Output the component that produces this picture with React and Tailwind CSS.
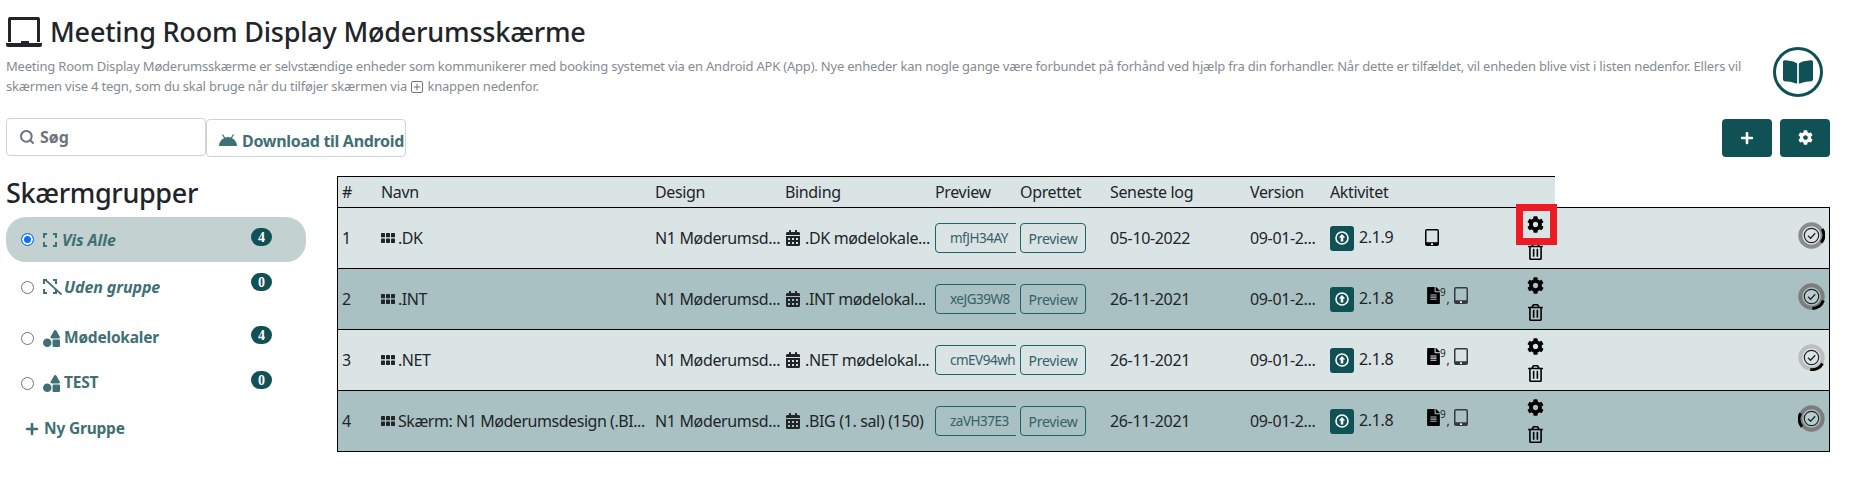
import { Plus, Search } from "lucide-react";
import { FaBookOpen, FaCalendarAlt, FaCog, FaFileAlt, FaPlus, FaRegTrashAlt, FaShapes } from "react-icons/fa";

const GROUPS = [
    { label: "Vis Alle", count: 4, icon: "all", active: true, italic: true, rowClass: "h-[45px] mb-px", badgeClass: "mt-[11px]" },
    { label: "Uden gruppe", count: 0, icon: "none", italic: true, rowClass: "h-[48px]", badgeClass: "mt-[10px]" },
    { label: "Mødelokaler", count: 4, icon: "shapes", rowClass: "h-[54px]", badgeClass: "mt-[15px]" },
    { label: "TEST", count: 0, icon: "shapes", rowClass: "h-[36px]", badgeClass: "mt-[6px]" },
];

const ROWS = [
    { id: 1, name: ".DK", binding: ".DK mødelokale...", code: "mfJH34AY", created: "05-10-2022", version: "2.1.9", file: false, ring: "#8b8b8b", rotate: 0, marked: true },
    { id: 2, name: ".INT", binding: ".INT mødelokal...", code: "xeJG39W8", created: "26-11-2021", version: "2.1.8", file: true, ring: "#7d7d7d", rotate: 50 },
    { id: 3, name: ".NET", binding: ".NET mødelokal...", code: "cmEV94wh", created: "26-11-2021", version: "2.1.8", file: true, ring: "#bdbdbd", rotate: 60 },
    { id: 4, name: "Skærm: N1 Møderumsdesign (.BI...", binding: ".BIG (1. sal) (150)", code: "zaVH37E3", created: "26-11-2021", version: "2.1.8", file: true, ring: "#7d7d7d", rotate: 170 },
];

const HEADERS = ["#", "Navn", "Design", "Binding", "Preview", "Oprettet", "Seneste log", "Version", "Aktivitet", ""];

function LaptopIcon() {
    return (
        <svg width="36" height="30" viewBox="0 0 36 30" fill="#212529">
            <path d="M4 0h28a2 2 0 0 1 2 2v23h-3V3H5v22H2V2a2 2 0 0 1 2-2z" />
            <path d="M0 26h15v-2h8v2h13v2a2 2 0 0 1-2 2H2a2 2 0 0 1-2-2z" />
        </svg>
    );
}

function AndroidIcon() {
    return (
        <svg width="18" height="12" viewBox="0 0 18 12" fill="#3f7073" className="mt-[4px] shrink-0">
            <path d="M0 12a9 9 0 0 1 18 0z" />
            <path d="M3.5 0.5l2.5 4M14.5 0.5l-2.5 4" stroke="#3f7073" strokeWidth="1.2" />
        </svg>
    );
}

function CornersIcon() {
    return (
        <svg width="14" height="14" viewBox="0 0 14 14" fill="none" stroke="#3f7073" strokeWidth="2" className="mr-[5px] shrink-0">
            <path d="M1 5V1h3M10 1h3v4M13 9v4h-3M4 13H1V9" />
        </svg>
    );
}

function SlashedCornersIcon() {
    return (
        <svg width="20" height="16" viewBox="0 0 20 16" fill="none" stroke="#3f7073" strokeWidth="2" className="mr-px shrink-0">
            <path d="M1 5V1h3M10 1h3v4M13 10v4h-3M4 14H1v-4" />
            <path d="M1.5 0l17 15.5" strokeWidth="1.7" />
        </svg>
    );
}

function GroupIcon({ kind }) {
    if (kind === "shapes") return <FaShapes size={17} className="text-[#3f7073] mr-[4px] shrink-0" />;
    if (kind === "none") return <SlashedCornersIcon />;
    return <CornersIcon />;
}

function DotsIcon() {
    return (
        <svg width="14" height="10" viewBox="0 0 14 10" fill="#212529" className="shrink-0">
            <rect x="0" y="0" width="4" height="4.3" rx="0.6" />
            <rect x="5" y="0" width="4" height="4.3" rx="0.6" />
            <rect x="10" y="0" width="4" height="4.3" rx="0.6" />
            <rect x="0" y="5.6" width="4" height="4.3" rx="0.6" />
            <rect x="5" y="5.6" width="4" height="4.3" rx="0.6" />
            <rect x="10" y="5.6" width="4" height="4.3" rx="0.6" />
        </svg>
    );
}

function TabletIcon({ dim }) {
    const color = dim ? "#33393c" : "#000000";
    return (
        <svg width="14" height="17" viewBox="0 0 14 17" fill={color} className="shrink-0">
            <path d="M2 0h10a2 2 0 0 1 2 2v13a2 2 0 0 1-2 2H2a2 2 0 0 1-2-2V2a2 2 0 0 1 2-2zm0 1.5a.5.5 0 0 0-.5.5v11.2h11V2a.5.5 0 0 0-.5-.5z" />
            <rect x="6" y="14.4" width="2" height="1.6" fill="#ffffff" />
        </svg>
    );
}

function UpCircleIcon() {
    return (
        <svg width="14" height="14" viewBox="0 0 14 14">
            <circle cx="7" cy="7" r="6" fill="none" stroke="#ffffff" strokeWidth="1.6" />
            <path d="M7 3l3.2 3.6H8.3V10.6H5.7V6.6H3.8z" fill="#ffffff" />
        </svg>
    );
}

function StatusRing({ color, rotate }) {
    return (
        <svg width="27" height="27" viewBox="0 0 27 27" fill="none">
            <circle cx="13.5" cy="13.5" r="11.2" stroke={color} strokeWidth="4" />
            <path d="M24.2 7a11.5 11.5 0 0 1-1 13.5" stroke="#000000" strokeWidth="3" transform={`rotate(${rotate} 13.5 13.5)`} />
            <circle cx="13.5" cy="13.5" r="7.2" stroke="#212529" strokeWidth="1.2" fill="#dae4e5" fillOpacity="0.35" />
            <path d="M10 13.8l2.6 2.5 4.6-5" stroke="#212529" strokeWidth="1.3" />
        </svg>
    );
}

function SearchBox() {
    return (
        <div className="w-[200px] h-[38px] flex items-center gap-[5px] pl-3 border border-[#ced4da] rounded text-[16px] font-bold text-[#6c757d]">
            <Search size={16} strokeWidth={3} />
            <span>Søg</span>
        </div>
    );
}

function Sidebar() {
    return (
        <aside className="w-[331px] shrink-0">
            <h2 className="text-[27px] leading-[32px] font-medium text-[#212529] mt-px mb-[8px] tracking-[-0.35px]">Skærmgrupper</h2>
            {GROUPS.map((g) => (
                <div key={g.label} className={`w-[300px] flex items-start pl-[15px] ${g.rowClass} ${g.active ? "bg-[#c3d1d1] rounded-[20px]" : ""}`}>
                    <div className="w-[230px] h-full flex items-center">
                        <span className={`w-[13px] h-[13px] mr-[9px] rounded-full shrink-0 ${g.active ? "border border-[#0d6efd] bg-[#0d6efd] shadow-[inset_0_0_0_2px_#ffffff]" : "border border-[#6f7478] bg-white"}`} />
                        <GroupIcon kind={g.icon} />
                        <span className={`font-bold text-[#3f7073] ${g.italic ? "text-[16px] tracking-[-0.1px] italic" : "text-[15.5px] tracking-[-0.2px]"}`}>{g.label}</span>
                    </div>
                    <span className={`w-[21px] h-[18px] rounded-full bg-[#0f5155] text-white text-[14px] font-bold flex items-center justify-center font-['Liberation_Serif',serif] ${g.badgeClass}`}>
                        {g.count}
                    </span>
                </div>
            ))}
            <div className="flex items-center gap-[5px] pl-[19px] mt-[16px] text-[15.5px] font-bold text-[#3f7073] tracking-[-0.2px]">
                <FaPlus size={14} />
                <span>Ny Gruppe</span>
            </div>
        </aside>
    );
}

function DeviceTable() {
    return (
        <table className="w-[1493px] table-fixed border-separate border-spacing-0 text-[16px] text-[#212529] tracking-[-0.35px]">
            <colgroup>
                <col className="w-[40px]" />
                <col className="w-[274px]" />
                <col className="w-[130px]" />
                <col className="w-[150px]" />
                <col className="w-[85px]" />
                <col className="w-[90px]" />
                <col className="w-[140px]" />
                <col className="w-[80px]" />
                <col className="w-[95px]" />
                <col className="w-[95px]" />
                <col className="w-[39px]" />
                <col />
            </colgroup>
            <thead>
                <tr className="h-[32px] bg-[#dae4e5]">
                    {HEADERS.map((h, i) => (
                        <th key={i} className={`font-normal text-left pl-1 border-t border-b border-black ${i === 0 ? "border-l" : ""}`}>
                            {h}
                        </th>
                    ))}
                    <th className="border-t border-b border-black" />
                    <th className="bg-white border-b border-black" />
                </tr>
            </thead>
            <tbody>
                {ROWS.map((r) => (
                    <tr key={r.id} className={`h-[61px] ${r.id % 2 ? "bg-[#dae4e5]" : "bg-[#a9c1c2]"}`}>
                        <td className="pl-1 border-l border-b border-black">{r.id}</td>
                        <td className="pl-1 border-b border-black">
                            <div className="flex items-center gap-[3px] whitespace-nowrap tracking-[-0.45px]">
                                <DotsIcon />
                                <span>{r.name}</span>
                            </div>
                        </td>
                        <td className="pl-1 border-b border-black whitespace-nowrap">N1 Møderumsd...</td>
                        <td className="pl-1 border-b border-black">
                            <div className="flex items-center gap-[4px] whitespace-nowrap">
                                <FaCalendarAlt size={16} className="shrink-0" />
                                <span>{r.binding}</span>
                            </div>
                        </td>
                        <td className="pl-1 border-b border-black overflow-hidden">
                            <div className="w-[95px] h-[30px] pl-[14px] flex items-center border border-[#1c6468] rounded text-[13.5px] text-[#36606a] whitespace-nowrap tracking-[-0.5px]">{r.code}</div>
                        </td>
                        <td className="pl-1 border-b border-black">
                            <div className="w-[66px] h-[30px] flex items-center justify-center border border-[#1c6468] rounded text-[14px] text-[#36606a] tracking-[-0.3px]">Preview</div>
                        </td>
                        <td className="pl-1 border-b border-black">{r.created}</td>
                        <td className="pl-1 border-b border-black whitespace-nowrap">09-01-2...</td>
                        <td className="pl-1 border-b border-black">
                            <div className="flex items-center gap-[5px]">
                                <div className="w-[24px] h-[25px] rounded-[3px] bg-[#0f5155] flex items-center justify-center">
                                    <UpCircleIcon />
                                </div>
                                <span className="-mt-[2px]">{r.version}</span>
                            </div>
                        </td>
                        <td className="pl-1 border-b border-black">
                            <div className="flex items-start gap-[1px] -mt-[1px]">
                                {r.file && (
                                    <>
                                        <FaFileAlt size={17} className="text-black" />
                                        <span className="text-[10px] leading-[10px] -ml-[3px]">9</span>
                                        <span className="text-[12px] leading-[24px] mr-[4px]">,</span>
                                    </>
                                )}
                                <TabletIcon dim={r.file} />
                            </div>
                        </td>
                        <td className="border-b border-black">
                            <div className="relative flex flex-col items-center gap-[10px] text-black">
                                <FaCog size={17} />
                                <FaRegTrashAlt size={17} />
                                {r.marked && <span className="absolute -top-[12px] left-0 w-[41px] h-[41px] border-[7px] border-[#ed1c24]" />}
                            </div>
                        </td>
                        <td className="border-b border-r border-black pr-[4px]">
                            <div className="flex justify-end -mt-[5px]">
                                <StatusRing color={r.ring} rotate={r.rotate} />
                            </div>
                        </td>
                    </tr>
                ))}
            </tbody>
        </table>
    );
}

export default function App() {
    return (
        <div className="min-h-[493px] bg-white px-[6px] font-['Noto_Sans',sans-serif]">
            <div className="flex items-start pt-[16px]">
                <div className="flex-1 min-w-0">
                    <h1 className="flex items-center gap-[8px] text-[27px] leading-[32px] font-medium text-[#212529] tracking-[-0.2px]">
                        <LaptopIcon />
                        <span>Meeting Room Display Møderumsskærme</span>
                    </h1>
                    <p className="w-[1750px] mt-[8px] text-[13px] leading-[20px] text-[#858b90] tracking-[-0.2px]">
                        Meeting Room Display Møderumsskærme er selvstændige enheder som kommunikerer med booking systemet via en Android APK (App). Nye enheder kan nogle gange være forbundet på forhånd ved hjælp fra din forhandler. Når dette er tilfældet, vil enheden blive vist i listen nedenfor. Ellers vil skærmen vise 4 tegn, som du skal bruge når du tilføjer skærmen via{" "}
                        <Plus size={12} strokeWidth={2.5} className="inline mx-px border border-[#6c757d] rounded-[2px] text-[#6c757d] align-[-2px]" /> knappen nedenfor.
                    </p>
                </div>
                <div className="w-[50px] h-[50px] mt-[31px] mr-[28px] rounded-full border-[3px] border-[#0f5155] flex items-center justify-center text-[#0f5155]">
                    <FaBookOpen size={30} />
                </div>
            </div>

            <div className="flex items-center justify-between mt-[21px] pr-[21px]">
                <div className="flex items-start">
                    <SearchBox />
                    <div className="w-[200px] h-[38px] mt-px pl-3 flex items-center gap-[5px] border border-[#ced4da] rounded text-[16px] font-bold text-[#3f7073] tracking-[-0.3px] whitespace-nowrap">
                        <AndroidIcon />
                        <span className="mt-[5px]">Download til Android</span>
                    </div>
                </div>
                <div className="flex gap-[8px]">
                    <div className="w-[50px] h-[38px] rounded bg-[#0f5155] flex items-center justify-center text-white">
                        <FaPlus size={14} />
                    </div>
                    <div className="w-[50px] h-[38px] rounded bg-[#0f5155] flex items-center justify-center text-white">
                        <FaCog size={15} />
                    </div>
                </div>
            </div>

            <div className="flex items-start mt-[19px]">
                <Sidebar />
                <DeviceTable />
            </div>
        </div>
    );
}
